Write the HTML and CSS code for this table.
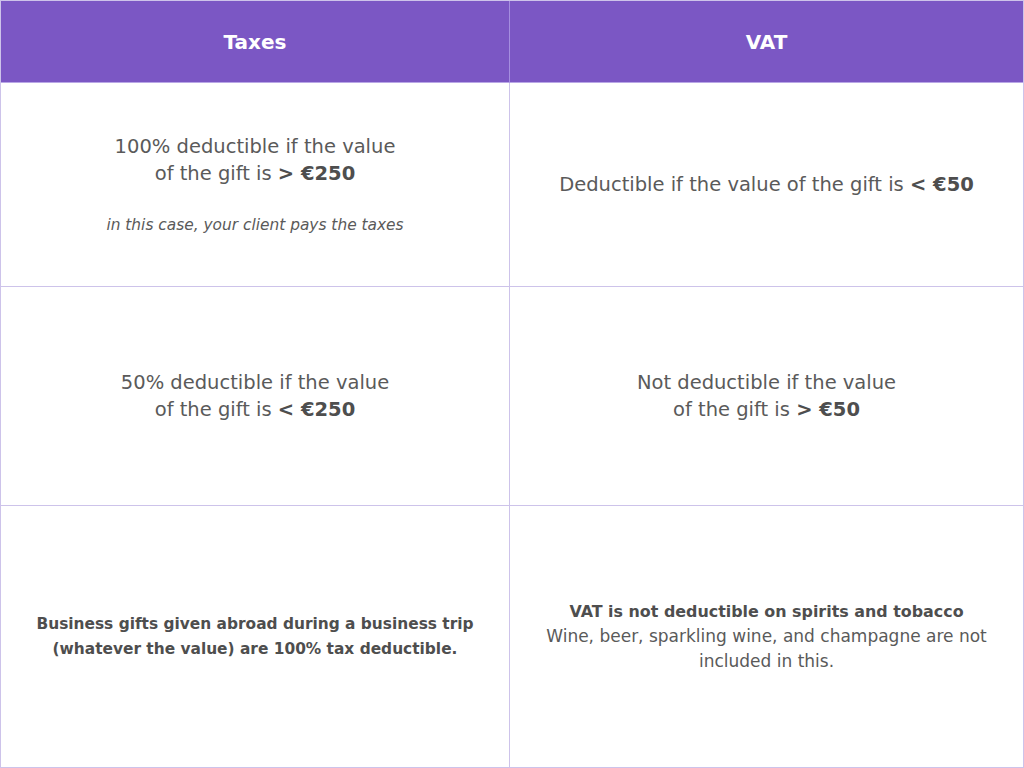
FILE: index.html
```html
<!DOCTYPE html>
<html lang="en">
<head>
<meta charset="utf-8">
<title>Business gifts: Taxes and VAT</title>
<link rel="stylesheet" href="styles.css">
</head>
<body>
<div class="table">
  <div class="cell head">Taxes</div>
  <div class="cell head">VAT</div>

  <div class="cell row1">
    <p class="main">100% deductible if the value<br>of the gift is <b>&gt; €250</b></p>
    <p class="note">in this case, your client pays the taxes</p>
  </div>
  <div class="cell row1">
    <p class="main">Deductible if the value of the gift is <b>&lt; €50</b></p>
  </div>

  <div class="cell row2">
    <p class="main">50% deductible if the value<br>of the gift is <b>&lt; €250</b></p>
  </div>
  <div class="cell row2">
    <p class="main">Not deductible if the value<br>of the gift is <b>&gt; €50</b></p>
  </div>

  <div class="cell row3">
    <p class="small bold">Business gifts given abroad during a business trip<br>(whatever the value) are 100% tax deductible.</p>
  </div>
  <div class="cell row3">
    <p class="small"><b>VAT is not deductible on spirits and tobacco</b><br>Wine, beer, sparkling wine, and champagne are not<br>included in this.</p>
  </div>
</div>
</body>
</html>
```

FILE: styles.css
```css
html, body {
  margin: 0;
  padding: 0;
  background: #ffffff;
}

body {
  font-family: "DejaVu Sans", "Liberation Sans", sans-serif;
  color: #5a5a5a;
}

.table {
  width: 1024px;
  height: 768px;
  box-sizing: border-box;
  display: grid;
  grid-template-columns: 509px 1fr;
  grid-template-rows: 82px 204px 219px 1fr;
  border: 1px solid #cdc3ea;
}

.cell {
  display: flex;
  flex-direction: column;
  align-items: center;
  justify-content: center;
  text-align: center;
  border-bottom: 1px solid #cdc3ea;
  box-sizing: border-box;
}

.cell:nth-child(odd) {
  border-right: 1px solid #cdc3ea;
}

.cell:nth-last-child(-n+2) {
  border-bottom: none;
}

.head {
  background: #7b57c4;
  color: #ffffff;
  font-weight: 700;
  font-size: 20px;
  border-bottom-color: #b9a7e6;
}

.head:nth-child(odd) {
  border-right-color: #a58ee0;
}

p {
  margin: 0;
}

.main {
  font-size: 19.5px;
  line-height: 27px;
}

.main b {
  font-weight: 700;
  color: #4e4e4e;
}

.note {
  font-size: 15.4px;
  font-style: italic;
  line-height: 24px;
  margin-top: 26px;
}

.small {
  font-size: 17px;
  line-height: 25px;
}

.small b {
  font-size: 15.9px;
  font-weight: 700;
  color: #4e4e4e;
}

.small.bold {
  font-size: 15.4px;
  font-weight: 700;
  color: #4e4e4e;
}
```
